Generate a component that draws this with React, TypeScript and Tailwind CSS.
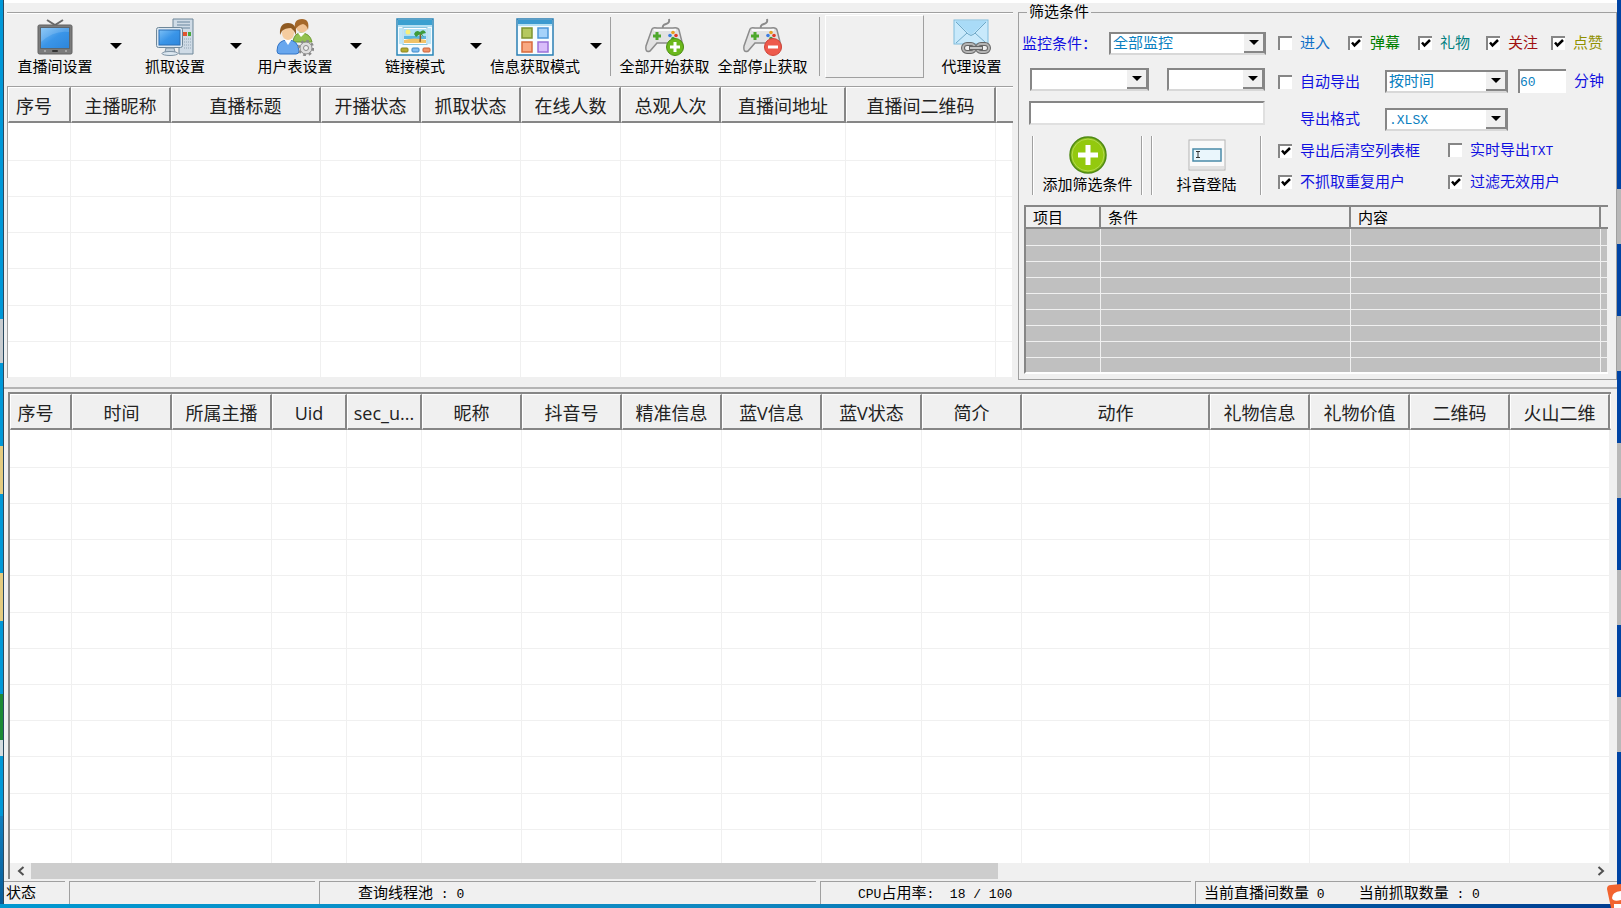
import { useState } from 'react';
import type { ReactNode } from 'react';
import clsx from 'clsx';

const TvIcon = () => (
  <svg viewBox="0 0 38 38" className="h-[38px] w-[38px]">
    <defs>
      <linearGradient id="screen" x1="0" y1="0" x2="1" y2="1">
        <stop offset="0" stopColor="#7cc0f6" />
        <stop offset="0.5" stopColor="#3a95e8" />
        <stop offset="1" stopColor="#2d86dc" />
      </linearGradient>
    </defs>
    <path d="M11 2 L19 7 L27 2" fill="none" stroke="#6a6a6a" strokeWidth="2" />
    <rect x="2" y="7" width="34" height="29" rx="1.5" fill="#7b7b7b" stroke="#626262" />
    <rect x="4" y="9" width="30" height="22" fill="#5b666f" />
    <rect x="5" y="10" width="28" height="20" fill="url(#screen)" />
    <path d="M5 24 Q18 12 33 14 V10 H5Z" fill="#fff" opacity="0.14" />
    <rect x="16" y="32" width="6" height="2" rx="1" fill="#333" />
    <rect x="8" y="32" width="2" height="2" fill="#a5a5a5" />
    <rect x="29" y="32" width="2" height="2" fill="#a5a5a5" />
  </svg>
);

const ComputerIcon = () => (
  <svg viewBox="0 0 38 38" className="h-[38px] w-[38px]">
    <path d="M17 1 H37 V36 H23 V10 H17Z" fill="#cfdbe6" stroke="#6f8799" />
    <path d="M21 4 H34 M21 7 H34 M23 10 H34" stroke="#8ba2b6" strokeWidth="1.4" />
    <rect x="27" y="14" width="4" height="4" fill="#e05530" />
    <rect x="32" y="14" width="3" height="4" fill="#48a83b" />
    <path d="M28 21h7M28 24h7M28 27h7M28 30h7" stroke="#93a6b6" strokeDasharray="1 1" />
    <rect x="0.5" y="9.5" width="26" height="20" rx="2" fill="#dce7f0" stroke="#6f8799" />
    <rect x="3" y="12" width="21" height="15" fill="url(#screen)" stroke="#2b6fb4" />
    <path d="M10 30 H18 L19 34 H9Z" fill="#c2d0dc" stroke="#7e93a4" />
    <ellipse cx="14" cy="35.5" rx="8" ry="2" fill="#dce7f0" stroke="#7e93a4" />
  </svg>
);

const UsersIcon = () => (
  <svg viewBox="0 0 38 38" className="h-[38px] w-[38px]">
    <path d="M17 24 Q18 15 25 15 Q34 15 36 24Z" fill="#93c14f" stroke="#6b9a30" />
    <circle cx="26" cy="8.500" r="6" fill="#f0c293" />
    <path d="M19 12 Q17 1 26 1 Q34 1 32 12 Q31 7 27 6 Q22 7 19 12Z" fill="#a5682a" />
    <path d="M22 15 L25 19 L29 15Z" fill="#fff" />
    <path d="M1 33 Q1 22 12 22 Q22 22 23 33 Q23 36 20 36 H4 Q1 36 1 33Z" fill="#68a7ee" stroke="#3274c6" />
    <path d="M8 21 L12 27 L16 21Z" fill="#fff" />
    <ellipse cx="12" cy="15" rx="6" ry="7" fill="#f5cc9f" />
    <path d="M4 17 Q3 5 12 5 Q21 5 20 17 Q18 12 15 10 Q9 10 6 13 Q5 15 4 17Z" fill="#8f5a22" />
    <circle cx="30" cy="30" r="7" fill="none" stroke="#8a8a8a" strokeWidth="2.500" strokeDasharray="2.750 2.750" />
    <circle cx="30" cy="30" r="6" fill="#dedede" stroke="#8a8a8a" />
    <circle cx="30" cy="30" r="2.500" fill="#f0f0f0" stroke="#8a8a8a" />
  </svg>
);

const PictureIcon = () => (
  <svg viewBox="0 0 38 38" className="h-[38px] w-[38px]">
    <rect x="1" y="1" width="36" height="36" fill="#f4fbff" stroke="#2a86b8" strokeWidth="1.500" />
    <rect x="2" y="2" width="34" height="5" fill="#3ba0d0" />
    <rect x="2" y="7" width="34" height="2" fill="#b5e0f2" />
    <rect x="3" y="10" width="3" height="16" fill="#bfe6f6" />
    <rect x="32" y="10" width="3" height="16" fill="#bfe6f6" />
    <rect x="7" y="9.500" width="24" height="17" fill="#fff" stroke="#8ac6e0" />
    <rect x="8" y="11" width="22" height="8" fill="#aee0f6" />
    <rect x="8" y="18" width="22" height="3" fill="#5ab6e0" />
    <path d="M8 22 Q18 19 30 22 V25 H8Z" fill="#f0c268" />
    <circle cx="12" cy="14" r="2.500" fill="#f6ee7a" />
    <path d="M24 24 Q25 19 24 15" stroke="#8a5a28" strokeWidth="1.500" fill="none" />
    <path d="M18 16 Q20 11 24 14 Q28 10 30 15 L26 16 L28 19 L24 16 L20 19Z" fill="#3d9a3a" />
    <rect x="5" y="30" width="7" height="4" rx="1" fill="#b5ac30" stroke="#8d8520" />
    <rect x="16" y="30" width="7" height="4" rx="1" fill="#82bdf0" stroke="#3e88c8" />
    <rect x="27" y="30" width="7" height="4" rx="1" fill="#f0946a" stroke="#cc6238" />
  </svg>
);

const GridIcon = () => (
  <svg viewBox="0 0 38 38" className="h-[38px] w-[38px]">
    <rect x="1" y="1" width="36" height="36" fill="#f6fcff" stroke="#2a7fb4" strokeWidth="1.500" />
    <rect x="2" y="2" width="34" height="4" fill="#3b9ad0" />
    <rect x="2" y="6" width="34" height="2" fill="#b5e0f2" />
    <rect x="6" y="10" width="10" height="10" fill="#b5c860" stroke="#7e9430" strokeWidth="1.500" />
    <rect x="22" y="10" width="10" height="10" fill="#a5d2fa" stroke="#4c96d8" strokeWidth="1.500" />
    <rect x="6" y="24" width="10" height="10" fill="#f8a882" stroke="#d86a3c" strokeWidth="1.500" />
    <rect x="22" y="24" width="10" height="10" fill="#d8bdfa" stroke="#9c70d8" strokeWidth="1.500" />
  </svg>
);

const GamepadIcon = ({ stop }: { stop?: boolean }) => (
  <svg viewBox="0 0 40 38" className="h-[38px] w-10">
    <path d="M18 10 Q17 7 21 6 Q25 5 24 1" fill="none" stroke="#8a8a8a" strokeWidth="2" />
    <path
      d="M7 11 Q8 9 12 10 H28 Q33 9 34 12 L38 28 Q38 34 34 32 L28 25 H12 L5 33 Q0 35 1 28Z"
      fill="#e2e2e2"
      stroke="#8c8c8c"
      strokeWidth="1.500"
    />
    <path d="M9 12 H31" stroke="#fff" strokeWidth="1.500" />
    <path d="M12 14v8M8 18h8" stroke="#4ea82c" strokeWidth="3" />
    <circle cx="28" cy="14.500" r="1.800" fill="#e8a020" />
    <circle cx="25" cy="17.500" r="1.800" fill="#3c7ce0" />
    <circle cx="31" cy="17.500" r="1.800" fill="#e03c28" />
    <circle cx="28" cy="20.500" r="1.800" fill="#3ca03c" />
    <circle cx="30" cy="29" r="8.500" fill={stop ? '#ee5a4c' : '#6cb81c'} stroke={stop ? '#d04438' : '#4c9010'} />
    <path d={stop ? 'M25 29h10' : 'M30 24v10M25 29h10'} stroke="#fff" strokeWidth="3" />
  </svg>
);

const MailIcon = () => (
  <svg viewBox="0 0 40 38" className="h-[38px] w-10">
    <rect x="2" y="2" width="34" height="24" fill="#c8e9fb" stroke="#7fbbdc" />
    <path d="M3 3 L19 17 L35 3Z" fill="#a9dbf7" />
    <path d="M4 4 L16 16 Q19 19 22 16 L34 4 M4 25 L15 15 M34 25 L23 15" fill="none" stroke="#6fa9c8" />
    <g fill="none" strokeWidth="4" stroke="#666">
      <rect x="11" y="26" width="12" height="8" rx="4" />
      <rect x="25" y="26" width="12" height="8" rx="4" />
    </g>
    <g fill="none" strokeWidth="2" stroke="#b4b4b4">
      <rect x="11" y="26" width="12" height="8" rx="4" />
      <rect x="25" y="26" width="12" height="8" rx="4" />
    </g>
    <path d="M17 30 H31" stroke="#666" strokeWidth="4" />
    <path d="M18 30 H30" stroke="#c4c4c4" strokeWidth="2" />
  </svg>
);

const AddIcon = () => (
  <svg viewBox="0 0 38 38" className="h-[38px] w-[38px]">
    <circle cx="19" cy="19" r="18" fill="#84b818" stroke="#4f8a14" strokeWidth="1.500" />
    <circle cx="19" cy="19" r="16" fill="#93c90e" stroke="#b4dc50" />
    <path d="M19 9v20M9 19h20" stroke="#fff" strokeWidth="5" />
  </svg>
);

const TextBoxIcon = () => (
  <svg viewBox="0 0 38 38" className="h-[38px] w-[38px]">
    <rect x="1" y="4" width="36" height="30" fill="#fafafa" stroke="#b4b4b4" />
    <rect x="2" y="30" width="34" height="3" fill="#e2e2e2" />
    <rect x="5" y="13" width="28" height="12" fill="#eaf6fc" stroke="#4a8aa8" strokeWidth="1.500" />
    <path d="M8 15.500h4M10 15.500v6M8 21.500h4" stroke="#333" fill="none" />
  </svg>
);

const Triangle = () => (
  <svg viewBox="0 0 12 6" className="h-1.5 w-3">
    <path d="M0 0H12L6 6Z" fill="#000" />
  </svg>
);

const ToolButton = ({ icon, label, className }: { icon: ReactNode; label: string; className?: string }) => (
  <button className={clsx('flex flex-col items-center gap-0.5 leading-[18px] whitespace-nowrap', className)}>
    {icon}
    <span>{label}</span>
  </button>
);

const MENU_TOOLS = [
  { label: '直播间设置', icon: <TvIcon /> },
  { label: '抓取设置', icon: <ComputerIcon /> },
  { label: '用户表设置', icon: <UsersIcon /> },
  { label: '链接模式', icon: <PictureIcon /> },
  { label: '信息获取模式', icon: <GridIcon /> },
];

const Toolbar = () => (
  <div className="flex h-[74px] border-t border-[#a0a0a0] shadow-[inset_0_1px_0_#fff]">
    {MENU_TOOLS.map((tool) => (
      <div key={tool.label} className="flex w-[120px]">
        <ToolButton icon={tool.icon} label={tool.label} className="w-24 pt-[5px]" />
        <button aria-label={`${tool.label}菜单`} className="flex w-6 items-center justify-center pb-[7px] pl-0.5">
          <Triangle />
        </button>
      </div>
    ))}
    <div className="mx-[3px] mt-1 mb-2.5 w-px bg-[#a0a0a0]" />
    <ToolButton icon={<GamepadIcon />} label="全部开始获取" className="w-[99px] pt-[5px] pl-0.5" />
    <ToolButton icon={<GamepadIcon stop />} label="全部停止获取" className="w-[99px] pt-[5px]" />
    <div className="mr-[5px] ml-[7px] mt-1 mb-2.5 w-px bg-[#a0a0a0]" />
    <div className="mt-0.5 mb-2 w-[99px] border border-t-white border-r-[#a0a0a0] border-b-[#a0a0a0] border-l-white" />
    <ToolButton icon={<MailIcon />} label="代理设置" className="flex-1 pt-[5px] pl-1.5" />
  </div>
);

type Column = { name: string; width?: number };

const DataTable = ({ columns, rows }: { columns: Column[]; rows: number }) => (
  <table className="w-full table-fixed border-separate border-spacing-0 bg-white font-['Open_Sans','Noto_Sans_CJK_SC',sans-serif]">
    <colgroup>
      {columns.map((col) => (
        <col key={col.name} style={{ width: col.width }} />
      ))}
    </colgroup>
    <thead>
      <tr>
        {columns.map((col, i) => (
          <th
            key={col.name}
            className={clsx(
              'h-9 overflow-hidden border-t border-b-2 border-l border-t-white border-b-[#868686] border-l-white bg-[#f0f0f0] p-0 pt-[3px] text-lg leading-6 font-normal whitespace-nowrap text-[#222]',
              i === 0 && 'pr-2.5',
              i < columns.length - 1 && 'border-r-2 border-r-[#868686]',
            )}
          >
            {col.name}
          </th>
        ))}
      </tr>
    </thead>
    <tbody>
      {Array.from({ length: rows }, (_, i) => (
        <tr key={i}>
          {columns.map((col) => (
            <td
              key={col.name}
              className={clsx(
                'border-r border-b border-[#f0f0f0] p-0',
                i === 0 ? 'h-[38px]' : i % 5 === 4 ? 'h-[37px]' : 'h-9',
              )}
            />
          ))}
        </tr>
      ))}
    </tbody>
  </table>
);

const ROOM_COLUMNS: Column[] = [
  { name: '序号', width: 63 },
  { name: '主播昵称', width: 100 },
  { name: '直播标题', width: 150 },
  { name: '开播状态', width: 100 },
  { name: '抓取状态', width: 100 },
  { name: '在线人数', width: 100 },
  { name: '总观人次', width: 100 },
  { name: '直播间地址', width: 125 },
  { name: '直播间二维码', width: 150 },
  { name: '' },
];

const USER_COLUMNS: Column[] = [
  { name: '序号', width: 62 },
  { name: '时间', width: 100 },
  { name: '所属主播', width: 100 },
  { name: 'Uid', width: 75 },
  { name: 'sec_u...', width: 75 },
  { name: '昵称', width: 100 },
  { name: '抖音号', width: 100 },
  { name: '精准信息', width: 100 },
  { name: '蓝V信息', width: 100 },
  { name: '蓝V状态', width: 100 },
  { name: '简介', width: 100 },
  { name: '动作', width: 188 },
  { name: '礼物信息', width: 100 },
  { name: '礼物价值', width: 100 },
  { name: '二维码', width: 100 },
  { name: '火山二维', width: 100 },
  { name: '' },
];

type ComboProps = { label: string; options: string[]; className?: string; textSize?: string };

const Combo = ({ label, options, className, textSize = 'text-[15px]' }: ComboProps) => (
  <span className={clsx('relative block h-[23px] border-2 border-[#868686] border-b-[#d8d8d8] bg-white', className)}>
    <select
      aria-label={label}
      className={clsx(
        "block h-full w-full appearance-none pt-0.5 pl-0.5 font-['Liberation_Mono','Noto_Sans_CJK_SC',monospace] leading-[18px] text-[#0a80c0] outline-none",
        textSize,
      )}
    >
      {options.map((o) => (
        <option key={o}>{o}</option>
      ))}
    </select>
    <span className="pointer-events-none absolute inset-y-0 right-0 flex w-5 items-center justify-center border-r border-b-2 border-[#868686] bg-[#f0f0f0]">
      <svg viewBox="0 0 10 5" className="h-[5px] w-2.5">
        <path d="M0 0H10L5 5Z" fill="#000" />
      </svg>
    </span>
  </span>
);

const Num = ({ children }: { children: ReactNode }) => (
  <span className="font-['Liberation_Mono',monospace] text-[13px] leading-none whitespace-pre">{children}</span>
);

type CheckProps = { label: ReactNode; color?: string; on?: boolean };

const Check = ({ label, color = 'text-[#1010e0]', on = false }: CheckProps) => {
  const [checked, setChecked] = useState(on);

  return (
    <label className={clsx('flex items-center gap-2 whitespace-nowrap', color)}>
      <span className="relative block h-3.5 w-3.5">
        <input
          type="checkbox"
          checked={checked}
          onChange={() => setChecked(!checked)}
          className="block h-3.5 w-3.5 appearance-none border-t-2 border-l-2 border-[#868686] bg-white"
        />
        {checked && (
          <svg viewBox="0 0 14 14" className="pointer-events-none absolute inset-0 h-3.5 w-3.5">
            <path d="M4 6.500 L6.500 9.500 L12 4" fill="none" stroke="#000" strokeWidth="2.500" />
          </svg>
        )}
      </span>
      <span>{label}</span>
    </label>
  );
};

const Rule = () => <div className="w-0.5 border-r border-l border-l-[#a0a0a0] border-r-white" />;

const listHead = 'border-r-2 border-b-2 border-[#868686] bg-[#f0f0f0] p-0 pt-0.5 pl-[7px] leading-[18px] font-normal';

const FilterPanel = () => (
  <fieldset className="w-[599px] shrink-0 border border-[#a0a0a0] pb-[5px]">
    <legend className="ml-2 px-0.5 leading-[18px]">筛选条件</legend>
    <div className="flex pt-2.5">
      <div className="w-[259px] pl-[3px]">
        <div className="flex items-center">
          <span className="w-[87px] pt-0.5 text-[#1010e0]">监控条件：</span>
          <Combo label="监控条件" options={['全部监控']} className="w-[157px]" />
        </div>
        <div className="mt-3 flex gap-[18px] pl-2">
          <Combo label="条件项目" options={['']} className="w-[119px]" />
          <Combo label="条件" options={['']} className="w-[98px]" />
        </div>
        <input
          aria-label="条件内容"
          className="mt-2.5 ml-[7px] block h-6 w-[236px] border-2 border-t-[#868686] border-r-[#e0e0e0] border-b-[#e0e0e0] border-l-[#868686] bg-white px-1 outline-none"
        />
        <div className="mt-[11px] ml-2.5 flex h-[59px]">
          <Rule />
          <ToolButton icon={<AddIcon />} label="添加筛选条件" className="w-[107px]" />
          <Rule />
          <div className="w-2" />
          <Rule />
          <ToolButton icon={<TextBoxIcon />} label="抖音登陆" className="w-[107px]" />
          <Rule />
        </div>
      </div>
      <div className="flex-1 text-[#1010e0]">
        <div className="grid h-6 grid-cols-[70px_70px_68px_65px_auto] items-center">
          <Check label="进入" color="text-[#1070c8]" />
          <Check label="弹幕" color="text-[#008000]" on />
          <Check label="礼物" color="text-[#008080]" on />
          <Check label="关注" color="text-[#a01010]" on />
          <Check label="点赞" color="text-[#909000]" on />
        </div>
        <div className="mt-3.5 flex h-6 items-center">
          <div className="w-[107px] pt-0.5">
            <Check label="自动导出" />
          </div>
          <Combo label="导出方式" options={['按时间']} className="w-[123px]" />
          <input
            id="interval"
            defaultValue="60"
            className="ml-2.5 h-6 w-12 border-t-2 border-l-2 border-[#868686] bg-white font-['Liberation_Mono',monospace] text-[13px] text-[#0a80c0] outline-none"
          />
          <label htmlFor="interval" className="ml-2">
            分钟
          </label>
        </div>
        <div className="mt-3.5 flex h-6 items-center">
          <span className="w-[107px] pl-[22px]">导出格式</span>
          <Combo label="导出格式" options={['.XLSX']} className="w-[123px]" textSize="text-[13px]" />
        </div>
        <div className="mt-2 grid grid-cols-[170px_auto] gap-y-[7px]">
          <div className="flex h-6">
            <Check label="导出后清空列表框" on />
          </div>
          <div className="flex h-[22px]">
            <Check
              label={
                <>
                  实时导出<Num>TXT</Num>
                </>
              }
            />
          </div>
          <div className="flex h-6">
            <Check label="不抓取重复用户" on />
          </div>
          <Check label="过滤无效用户" on />
        </div>
      </div>
    </div>
    <div className="mt-2.5 mr-2 ml-[5px] border-t-2 border-b-2 border-l-2 border-[#868686] border-b-white">
      <table className="w-full table-fixed border-separate border-spacing-0 bg-[#c0c0c0] text-left">
        <thead>
          <tr>
            <th className={clsx(listHead, 'h-[21px] w-[75px]')}>项目</th>
            <th className={clsx(listHead, 'w-[250px]')}>条件</th>
            <th className={clsx(listHead, 'w-[250px]')}>内容</th>
            <th className="border-b-2 border-[#868686] bg-[#f0f0f0] p-0" />
          </tr>
        </thead>
        <tbody>
          {Array.from({ length: 9 }, (_, i) => (
            <tr key={i}>
              {[0, 1, 2, 3].map((c) => (
                <td
                  key={c}
                  className={clsx(
                    'border-r border-[#f0f0f0] p-0',
                    i === 0 ? 'h-[17px]' : i === 8 ? 'h-3.5' : 'h-4',
                    i < 8 && 'border-b',
                  )}
                />
              ))}
            </tr>
          ))}
        </tbody>
      </table>
    </div>
  </fieldset>
);

const StatusBar = () => (
  <footer className="flex gap-1 pt-0.5 leading-[22px] whitespace-nowrap *:h-[23px] *:border-t *:border-[#a0a0a0]">
    <div className="w-[61px] pl-0.5">状态</div>
    <div className="w-[246px] border-l" />
    <div className="w-[497px] border-l pl-[38px]">
      查询线程池<Num> : 0</Num>
    </div>
    <div className="w-[371px] border-l pl-[37px]">
      <Num>CPU</Num>占用率<Num>:  18 / 100</Num>
    </div>
    <div className="flex flex-1 gap-[34px] border-l pl-2">
      <span>
        当前直播间数量<Num> 0</Num>
      </span>
      <span>
        当前抓取数量<Num> : 0</Num>
      </span>
    </div>
  </footer>
);

const ScrollBar = () => (
  <div className="flex h-4 shrink-0 bg-[#f0f0f0] text-[#505050]">
    <button aria-label="向左滚动" className="flex w-[21px] items-center justify-center">
      <svg viewBox="0 0 8 10" className="h-2.5 w-2">
        <path d="M6.500 1L2 5L6.500 9" fill="none" stroke="currentColor" strokeWidth="2" />
      </svg>
    </button>
    <div className="flex-1">
      <div className="h-full w-[62%] bg-[#cdcdcd]" />
    </div>
    <button aria-label="向右滚动" className="flex w-[21px] items-center justify-center">
      <svg viewBox="0 0 8 10" className="h-2.5 w-2">
        <path d="M1.500 1L6 5L1.500 9" fill="none" stroke="currentColor" strokeWidth="2" />
      </svg>
    </button>
  </div>
);

// slices of the desktop visible on both sides of the window
const LeftEdge = () => (
  <div className="flex w-1 flex-col border-r border-[#2a4a60] bg-[#0098d8]">
    <div className="mt-[319px] h-11 bg-[#c8ccd0]" />
    <div className="mt-[83px] h-12 bg-[#e4cc80]" />
    <div className="mt-[79px] h-12 bg-[#e4cc80]" />
    <div className="mt-[73px] h-[46px] bg-[#1c8a34]" />
    <div className="h-4 bg-[#d4dce0]" />
    <div className="mt-[60px] flex-1 bg-linear-to-b from-[#1080c0] to-[#0a5c98]" />
  </div>
);

const RightEdge = () => (
  <div className="flex w-1 flex-col gap-[72px] overflow-hidden bg-[#0044a4] pt-[189px]">
    {[0, 1, 2, 3, 4].map((i) => (
      <div key={i} className="h-[55px] shrink-0 bg-[#b8b8b8]" />
    ))}
  </div>
);

export default function App() {
  return (
    <div className="relative flex h-screen flex-col overflow-hidden font-['Liberation_Sans','Noto_Sans_CJK_SC',sans-serif] text-[15px] text-black">
      <div className="flex min-h-0 flex-1">
        <LeftEdge />
        <div className="flex min-w-0 flex-1 flex-col border-t-[3px] border-white bg-[#f0f0f0]">
          <div className="flex gap-[5px] pl-[3px]">
            <section className="min-w-0 flex-1 pt-[9px]">
              <Toolbar />
              <div className="overflow-hidden border-t border-l border-[#a0a0a0]">
                <DataTable columns={ROOM_COLUMNS} rows={7} />
              </div>
            </section>
            <FilterPanel />
          </div>
          <section className="mt-[7px] flex min-h-0 flex-1 flex-col border-t-2 border-[#b4b4b4] pt-[3px] pr-1.5 pl-1">
            <div className="flex min-h-0 flex-1 flex-col border-t-2 border-l-2 border-[#868686]">
              <div className="min-h-0 flex-1 overflow-hidden bg-white">
                <DataTable columns={USER_COLUMNS} rows={12} />
              </div>
              <ScrollBar />
            </div>
          </section>
          <StatusBar />
        </div>
        <RightEdge />
      </div>
      <div className="h-1 shrink-0 bg-linear-to-r from-[#0098d0] via-[#1088c0] via-45% to-[#003c90]" />
      <svg viewBox="0 0 14 24" className="absolute right-0 bottom-0 h-6 w-3.5">
        <path d="M0 5 Q0 1 4 1 L14 0 V24 H4Z" fill="#f26430" />
        <path d="M14 7 Q5 8 5 14 Q6 18 14 16Z" fill="#fff" />
        <path d="M7 24 V20 H14 V24Z" fill="#fff" />
      </svg>
    </div>
  );
}
